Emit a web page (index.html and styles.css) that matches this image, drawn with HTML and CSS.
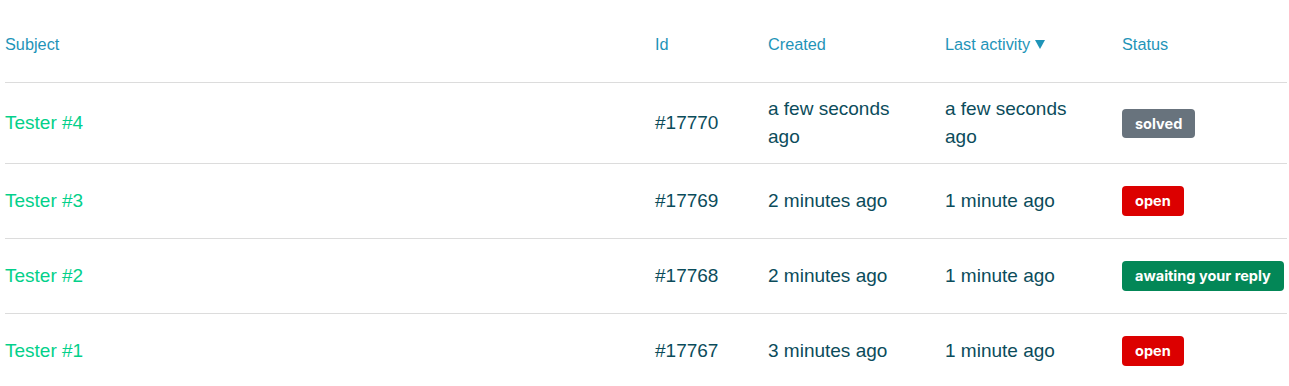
FILE: index.html
```html
<!DOCTYPE html>
<html>
<head>
<meta charset="utf-8">
<link rel="stylesheet" href="styles.css">
</head>
<body>
<div class="wrap">
<table class="requests">
  <colgroup>
    <col class="c-subject"><col class="c-id"><col class="c-created"><col class="c-activity"><col class="c-status">
  </colgroup>
  <thead>
    <tr>
      <th>Subject</th>
      <th>Id</th>
      <th>Created</th>
      <th>Last activity<span class="sort" aria-label="sorted descending"></span></th>
      <th>Status</th>
    </tr>
  </thead>
  <tbody>
    <tr class="tall">
      <td><a class="subject" href="#">Tester #4</a></td>
      <td>#17770</td>
      <td>a few seconds ago</td>
      <td>a few seconds ago</td>
      <td><span class="badge solved">solved</span></td>
    </tr>
    <tr>
      <td><a class="subject" href="#">Tester #3</a></td>
      <td>#17769</td>
      <td>2 minutes ago</td>
      <td>1 minute ago</td>
      <td><span class="badge open">open</span></td>
    </tr>
    <tr>
      <td><a class="subject" href="#">Tester #2</a></td>
      <td>#17768</td>
      <td>2 minutes ago</td>
      <td>1 minute ago</td>
      <td><span class="badge awaiting">awaiting your reply</span></td>
    </tr>
    <tr>
      <td><a class="subject" href="#">Tester #1</a></td>
      <td>#17767</td>
      <td>3 minutes ago</td>
      <td>1 minute ago</td>
      <td><span class="badge open">open</span></td>
    </tr>
  </tbody>
</table>
</div>
</body>
</html>
```

FILE: styles.css
```css
html, body {
  margin: 0;
  padding: 0;
  background: #ffffff;
  font-family: "Liberation Sans", Arial, sans-serif;
}

.wrap {
  padding: 0 2px 0 5px;
}

.requests {
  width: 100%;
  border-collapse: collapse;
  table-layout: fixed;
}

.c-subject { width: 650px; }
.c-id { width: 113px; }
.c-created { width: 177px; }
.c-activity { width: 177px; }
.c-status { width: auto; }

.requests th {
  text-align: left;
  font-weight: normal;
  font-size: 16.3px;
  line-height: 20px;
  color: #1f94b8;
  padding: 34px 0 28px 0;
  border-bottom: 1px solid #dcdcdc;
  vertical-align: middle;
  white-space: nowrap;
}

.sort {
  display: inline-block;
  width: 0;
  height: 0;
  border-left: 5px solid transparent;
  border-right: 5px solid transparent;
  border-top: 9px solid #1f94b8;
  margin-left: 5px;
  vertical-align: 1px;
}

.requests td {
  font-size: 19px;
  line-height: 28px;
  color: #0b4c5b;
  padding: 0 24px 0 0;
  height: 74px;
  vertical-align: middle;
  border-bottom: 1px solid #dcdcdc;
}

.requests tr.tall td {
  height: 80px;
}

.requests tbody tr:last-child td {
  border-bottom: none;
}

.subject {
  color: #03d08a;
  text-decoration: none;
}

.badge {
  display: inline-block;
  font-family: Inter, "Liberation Sans", sans-serif;
  font-weight: 700;
  font-size: 14.5px;
  line-height: 30px;
  height: 30px;
  padding: 0 13px;
  border-radius: 4px;
  color: #ffffff;
  vertical-align: middle;
  white-space: nowrap;
}

.badge.solved { background: #68737d; height: 29px; line-height: 29px; }
.badge.open { background: #dc0000; }
.badge.awaiting { background: #038757; }
```
